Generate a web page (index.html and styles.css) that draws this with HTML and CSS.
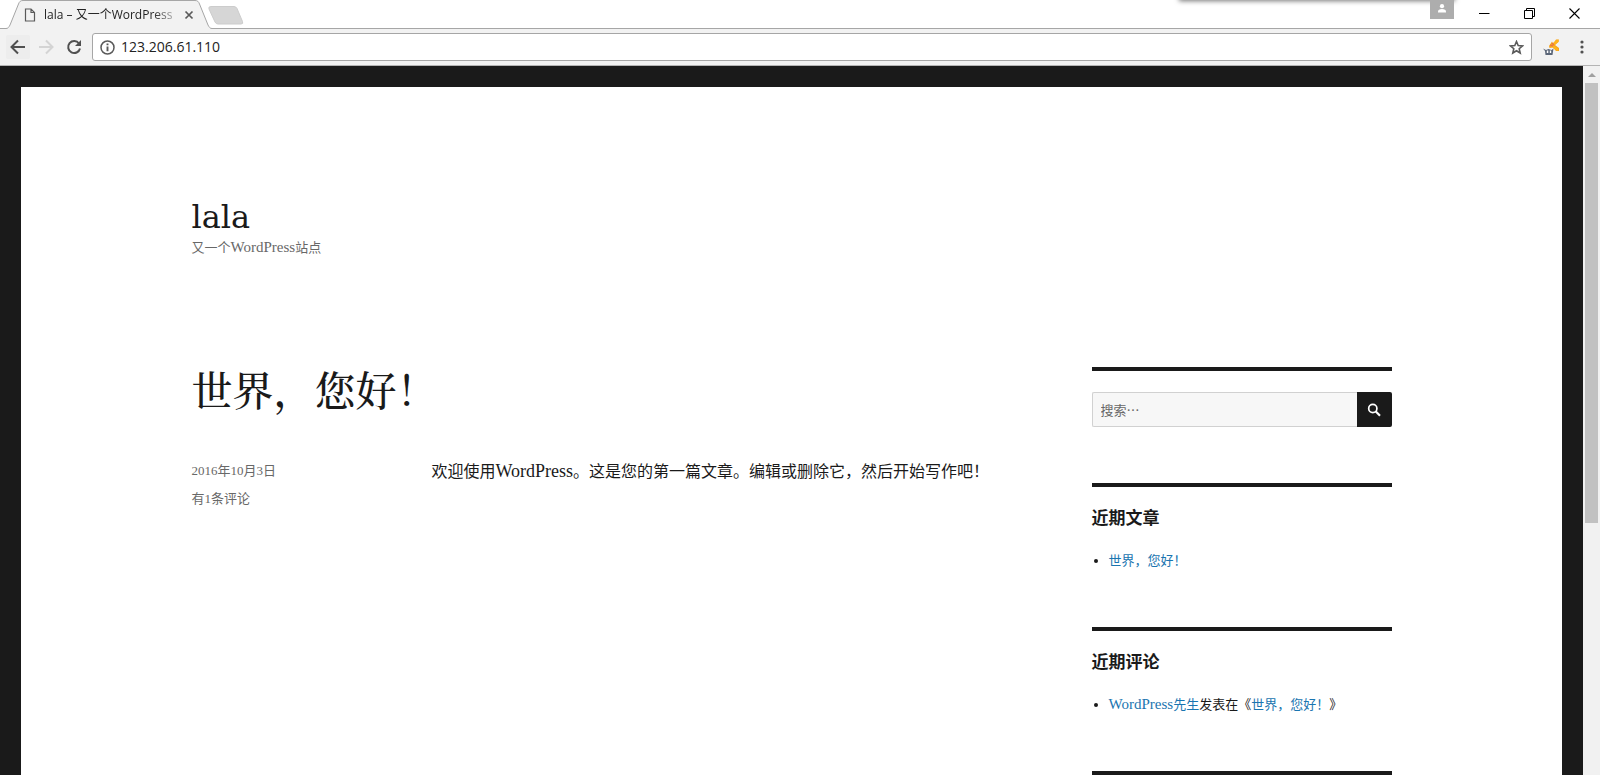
FILE: index.html
```html
<!DOCTYPE html>
<html lang="zh-CN">
<head>
<meta charset="utf-8">
<title>lala – 又一个WordPress站点</title>
<link rel="stylesheet" href="styles.css">
</head>
<body>
<div class="browser">
  <header class="tabstrip">
    <div class="tab">
      <svg class="tab-shape" viewBox="0 0 206 29" aria-hidden="true"><path d="M0 28.5C2 28.5 3 27 4 25L12.500 4C13.500 1.500 14.500.5 17 .5H189C191.500.5 192.500 1.500 193.500 4L202 25C203 27 204 28.500 206 28.500V29H0Z" fill="#f2f2f2"/><path d="M0 28.5C2 28.5 3 27 4 25L12.500 4C13.500 1.500 14.500.5 17 .5H189C191.500.5 192.500 1.500 193.500 4L202 25C203 27 204 28.500 206 28.500" fill="none" stroke="#a6a6a6"/></svg>
      <svg class="tab-file" width="12" height="14" viewBox="0 0 12 14" aria-hidden="true"><path d="M1.500 1H7L10.500 4.500V13H1.500ZM7 1V4.500H10.500" fill="none" stroke="#5a5a5a" stroke-width="1.200"/></svg>
      <span class="tab-title">lala – 又一个WordPress</span>
      <button class="tab-close" aria-label="关闭标签页"><svg width="10" height="10" viewBox="0 0 10 10"><path d="M1.500 1.500L8.500 8.500M8.500 1.500L1.500 8.500" stroke="#5a5a5a" stroke-width="1.700"/></svg></button>
    </div>
    <button class="new-tab" aria-label="新标签页"><svg width="36" height="19" viewBox="0 0 36 19"><path d="M3 .5H26Q28 .5 29 2.500L34.500 15.500Q35.500 18 33 18H10Q8 18 7 16L1 3Q0 .5 3 .5Z" fill="#d6d6d6" stroke="#cccccc"/></svg></button>
    <div class="window-shadow"></div>
    <div class="window-buttons">
      <button class="user" aria-label="用户"><svg width="10" height="9" viewBox="0 0 10 9"><circle cx="5" cy="2.200" r="2.100" fill="#fff"/><path d="M1 8.500V7.500Q1 5 5 5T9 7.500V8.500Z" fill="#fff"/></svg></button>
      <button class="win" aria-label="最小化"><svg width="11" height="11" viewBox="0 0 11 11"><path d="M0 5.500H10.500" stroke="#000"/></svg></button>
      <button class="win" aria-label="还原"><svg width="11" height="11" viewBox="0 0 11 11"><path d="M.5 2.500H8.500V10.500H.5ZM2.500 2.500V.5H10.500V8.500H8.500" fill="none" stroke="#000"/></svg></button>
      <button class="win" aria-label="关闭"><svg width="11" height="11" viewBox="0 0 11 11"><path d="M.5.5L10.500 10.500M10.500.5L.5 10.500" stroke="#000" stroke-width="1.100"/></svg></button>
    </div>
  </header>
  <nav class="toolbar" aria-label="浏览器工具栏">
    <button class="tool back" aria-label="后退"><svg width="16" height="16" viewBox="0 0 16 16"><path d="M15 8H2M8 1.500L1.500 8L8 14.500" fill="none" stroke="#505050" stroke-width="2"/></svg></button>
    <button class="tool" aria-label="前进"><svg width="16" height="16" viewBox="0 0 16 16"><path d="M1 8H14M8 1.500L14.500 8L8 14.500" fill="none" stroke="#d4d4d4" stroke-width="2"/></svg></button>
    <button class="tool" aria-label="重新加载"><svg width="16" height="16" viewBox="0 0 16 16"><path d="M13 4.500A6 6 0 1 0 14 9.500" fill="none" stroke="#505050" stroke-width="2"/><path d="M15 1V7H9Z" fill="#505050"/></svg></button>
    <div class="address">
      <svg width="15" height="15" viewBox="0 0 15 15" aria-hidden="true"><circle cx="7.500" cy="7.500" r="6.500" fill="none" stroke="#5a5a5a" stroke-width="1.500"/><path d="M7.500 6.500V11.300M7.500 3.500V5.200" stroke="#5a5a5a" stroke-width="1.900"/></svg>
      <input class="url" type="text" value="123.206.61.110" aria-label="地址">
      <button class="star" aria-label="加入书签"><svg width="15" height="15" viewBox="0 0 15 15"><path d="M7.500 1.500L9.200 5.500L13.500 5.900L10.200 8.700L11.200 13L7.500 10.700L3.800 13L4.800 8.700L1.500 5.900L5.800 5.500Z" fill="none" stroke="#5a5a5a" stroke-width="1.600"/></svg></button>
    </div>
    <button class="extension" aria-label="扩展程序"><svg width="17" height="17" viewBox="0 0 17 17"><path d="M6 7L9 2.500L10 5L13 .5H16L15.500 3L12 6L16 9V12L13 12L10 8.500L6.500 9Z" fill="#f7a51c"/><path d="M10 5.500L15 1.500M10 7.500L15 11" stroke="#ffb51c" stroke-width="2.400"/><path d="M7 6L10 7M9 4L11 6" stroke="#e8704a" stroke-width="1.300"/><path d="M0 9.500L3 11L5.500 10L8.500 11L10.500 9.500L9.500 16H2.500L2 12Z" fill="#5b6678"/><path d="M3.800 11.500H5.300V14H3.800ZM6.800 11.500H8.200V14H6.800Z" fill="#fff"/></svg></button>
    <button class="more" aria-label="更多"><svg width="4" height="14" viewBox="0 0 4 14"><g fill="#505050"><circle cx="2" cy="2" r="1.600"/><circle cx="2" cy="7" r="1.600"/><circle cx="2" cy="12" r="1.600"/></g></svg></button>
  </nav>
  <div class="viewport">
    <div class="site">
      <div class="site-inner">
        <header class="site-header">
          <a class="site-title" href="#">lala</a>
          <p class="tagline">又一个<span class="latin-small">WordPress</span>站点</p>
        </header>
        <div class="content">
          <main>
            <article>
              <h1 class="entry-title"><a href="#">世界，您好！</a></h1>
              <div class="entry">
                <footer class="entry-meta">
                  <a href="#">2016年10月3日</a>
                  <a href="#">有1条评论</a>
                </footer>
                <p class="entry-text">欢迎使用<span class="latin">WordPress</span>。这是您的第一篇文章。编辑或删除它，然后开始写作吧！</p>
              </div>
            </article>
          </main>
          <aside class="sidebar">
            <section class="widget">
              <form class="search">
                <input class="search-field" type="search" placeholder="搜索⋯" aria-label="搜索">
                <button class="search-button" type="button" aria-label="搜索"><svg width="14" height="14" viewBox="0 0 14 14"><circle cx="5.800" cy="5.500" r="4.100" fill="none" stroke="#fff" stroke-width="1.700"/><path d="M8.600 8.300L13 12.700" stroke="#fff" stroke-width="2.200"/></svg></button>
              </form>
            </section>
            <section class="widget">
              <h2 class="widget-title">近期文章</h2>
              <ul class="list"><li><a href="#">世界，您好！</a></li></ul>
            </section>
            <section class="widget">
              <h2 class="widget-title">近期评论</h2>
              <ul class="list"><li><a href="#"><span class="latin-small">WordPress</span>先生</a>发表在《<a href="#">世界，您好！</a>》</li></ul>
            </section>
            <section class="widget"></section>
          </aside>
        </div>
      </div>
    </div>
    <div class="scrollbar">
      <svg class="scroll-arrow" width="8" height="4" viewBox="0 0 8 4" aria-hidden="true"><path d="M0 4L4 0L8 4Z" fill="#a0a0a0"/></svg>
      <div class="thumb"></div>
    </div>
  </div>
</div>
</body>
</html>
```

FILE: styles.css
```css
* { box-sizing: border-box; }
body {
  margin: 0;
  color: #1a1a1a;
  font-family: "Liberation Serif", "Noto Sans CJK SC", serif;
}
button { margin: 0; padding: 0; border: 0; background: none; }
svg { display: block; flex: none; }
a { color: inherit; text-decoration: none; }
h1, h2, p, ul { margin: 0; padding: 0; }

.browser { display: flex; flex-direction: column; height: 100vh; overflow: hidden; }

/* Tab strip */
.tabstrip {
  position: relative;
  display: flex;
  flex: none;
  height: 29px;
  padding-left: 6px;
  background: #fff;
  border-bottom: 1px solid #a6a6a6;
}
.tab {
  position: relative;
  display: flex;
  align-items: center;
  width: 206px;
  height: 29px;
  padding: 0 18px;
}
.tab-shape { position: absolute; inset: 0; width: 206px; height: 29px; }
.tab-file { position: relative; margin-right: 8px; }
.tab-title {
  position: relative;
  flex: 1;
  white-space: nowrap;
  color: #222;
  font: 12px/20px "Open Sans", "Noto Sans CJK SC", sans-serif;
  mask-image: linear-gradient(to right, #000 82%, rgb(0 0 0 / 25%));
}
.tab-close { position: relative; margin-left: 8px; }
.new-tab { align-self: flex-start; margin-top: 6px; margin-left: -4px; z-index: 1; }
.window-shadow {
  position: absolute;
  top: -8px;
  right: 146px;
  width: 274px;
  height: 8px;
  box-shadow: 0 0 5px 1px #777;
}
.window-buttons { display: flex; margin-left: auto; padding-right: 3px; }
.user {
  position: relative;
  display: flex;
  justify-content: center;
  width: 24px;
  height: 19px;
  padding-top: 4px;
  margin-right: 8px;
  background: #adadad;
}
.win { display: grid; place-items: center; width: 45px; height: 26px; }

/* Toolbar */
.toolbar {
  display: flex;
  flex: none;
  align-items: center;
  height: 37px;
  padding: 0 16px 0 6px;
  background: #f2f2f2;
  border-bottom: 1px solid #b4b4b4;
}
.tool { display: grid; place-items: center; width: 24px; height: 24px; margin-right: 4px; }
.back { background: #ededed; border-radius: 2px; }
.address {
  display: flex;
  flex: 1;
  align-items: center;
  height: 28px;
  margin-left: 2px;
  padding: 0 7px;
  background: #fff;
  border: 1px solid #a6a6a6;
  border-radius: 3px;
}
.url {
  flex: 1;
  min-width: 0;
  padding: 0 0 0 6px;
  border: 0;
  outline: 0;
  background: none;
  color: #222;
  font: 14px/20px "Open Sans", sans-serif;
}
.extension { margin-left: 11px; }
.more { margin-left: 20px; }

/* Page viewport */
.viewport {
  display: flex;
  flex: 1;
  min-height: 0;
  background: #1a1a1a;
}
.site { flex: 1; margin: 21px 21px 0; background: #fff; overflow: hidden; }
.site-inner { max-width: 1320px; margin: 0 auto; padding: 0 60px; }
.site-header { padding: 112px 0; }
.site-title { display: block; font: 32px/37px "DejaVu Serif", serif; }
.tagline { color: #686868; font-size: 13px; line-height: 24px; }
.latin { font-size: 18px; line-height: 1; }
.latin-small { font-size: 15px; line-height: 1; }

.content { display: grid; grid-template-columns: 1fr 25%; align-items: start; column-gap: 84px; margin-top: -5px; }
.entry-title {
  font-family: "Noto Serif CJK SC", "Noto Sans CJK SC", serif;
  font-size: 41px;
  font-weight: 500;
  line-height: 44px;
}
.entry { display: flex; margin-top: 46px; }
.entry-meta {
  display: flex;
  flex: 0 0 240px;
  flex-direction: column;
  color: #686868;
  font-size: 13px;
  line-height: 28px;
}
.entry-text { font-size: 16px; line-height: 30px; }

/* Sidebar */
.widget { margin-bottom: 56px; padding-top: 21px; border-top: 4px solid #1a1a1a; }
.search { display: flex; height: 35px; }
.search-field {
  flex: 1;
  min-width: 0;
  padding: 0 8px;
  border: 1px solid #d1d1d1;
  border-right: 0;
  border-radius: 2px 0 0 2px;
  background: #f7f7f7;
  color: #686868;
  font: 13px/20px "Noto Sans CJK SC", sans-serif;
}
.search-field::placeholder { color: #686868; opacity: 1; }
.search-button {
  display: grid;
  place-items: center;
  width: 35px;
  background: #1a1a1a;
  border-radius: 0 2px 2px 0;
}
.widget-title { font-size: 17px; font-weight: 700; line-height: 21px; }
.list { margin-top: 21px; padding-left: 17px; font-size: 13px; line-height: 21px; }
.list a { color: #1a75b0; }

/* Scrollbar */
.scrollbar {
  display: flex;
  flex: none;
  flex-direction: column;
  align-items: center;
  width: 17px;
  background: #f1f1f1;
}
.scroll-arrow { margin: 7px 0 6px; }
.thumb { flex: none; width: 13px; height: 62%; background: #c1c1c1; }
```
